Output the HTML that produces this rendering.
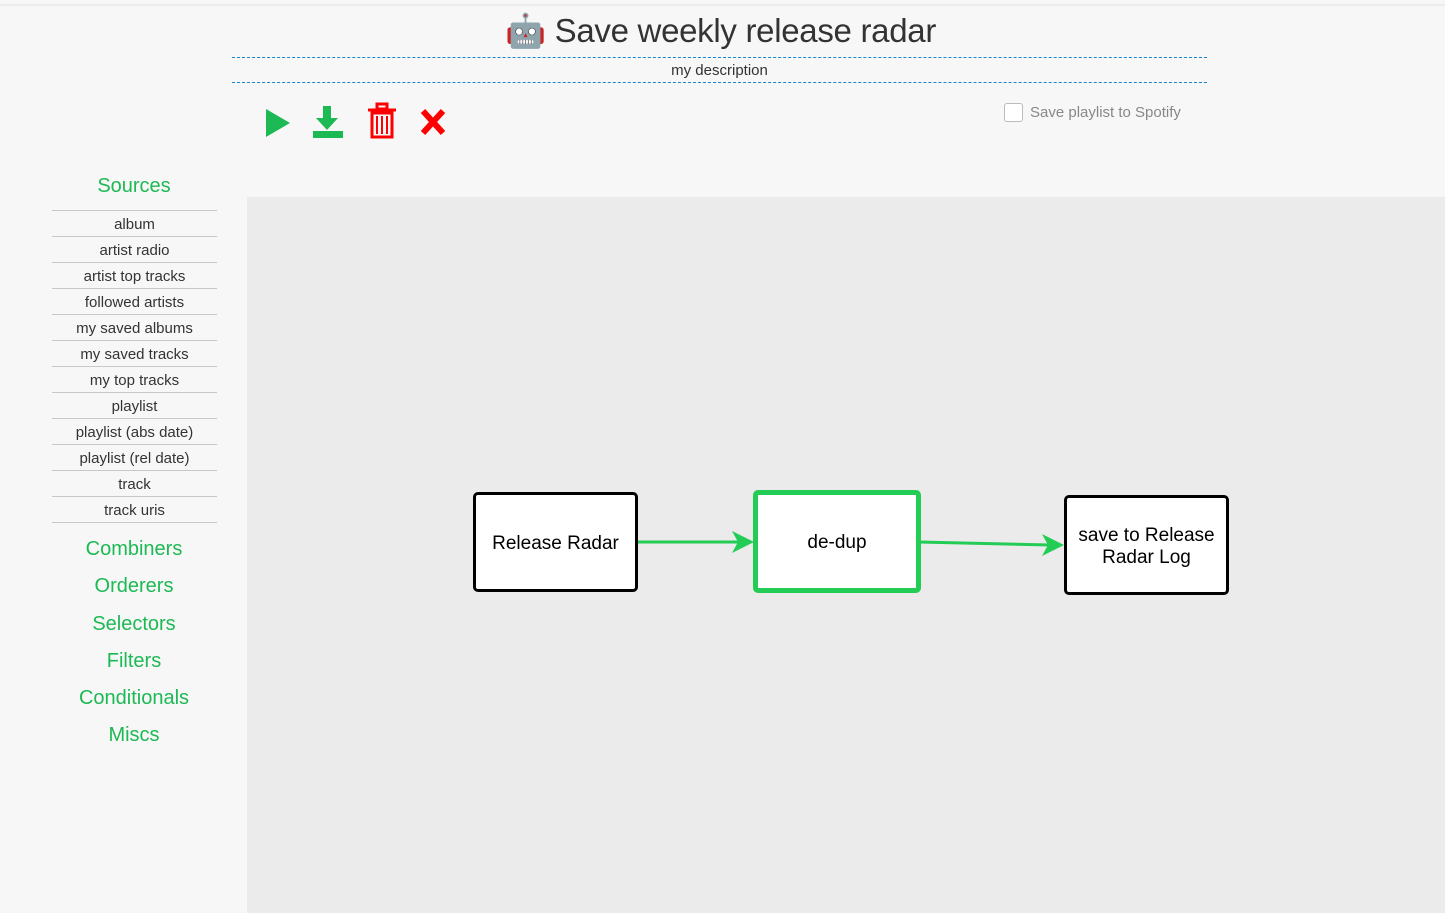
<!DOCTYPE html>
<html><head><style>
body{margin:0;width:1445px;height:913px;background:#f7f7f7;font-family:"Liberation Sans",sans-serif;position:relative;overflow:hidden;color:#333}
.topline{position:absolute;left:0;top:4px;width:1445px;height:2px;background:#ececec}
.title{position:absolute;left:505px;top:12px;font-size:33px;color:#333;white-space:nowrap;letter-spacing:-0.3px}
.desc{position:absolute;left:232px;top:57px;width:975px;height:24px;border-top:1px dashed #1a85d0;border-bottom:1px dashed #1a85d0;text-align:center;font-size:15px;line-height:26px;color:#333}
.side{position:absolute;left:52px;width:165px;text-align:center}
.cat{position:absolute;left:0;width:268px;text-align:center;color:#1db954;font-size:20px}
.item{height:25px;border-top:1px solid #c8c8c8;font-size:15px;line-height:27px;color:#333}
.canvas{position:absolute;left:247px;top:197px;width:1198px;height:716px;background:#ebebeb}
.node{position:absolute;background:#fff;border:3px solid #000;border-radius:5px;display:flex;align-items:center;justify-content:center;text-align:center;font-size:19px;color:#000;box-sizing:border-box;padding-top:3px}
</style></head><body>
<div class="topline"></div>
<div class="title">🤖 Save weekly release radar</div>
<div class="desc">my description</div>
<svg style="position:absolute;left:260px;top:100px" width="200" height="42">
<polygon points="6,9 30,23 6,37" fill="#1db954"/>
<rect x="63" y="6" width="8" height="14" fill="#1db954"/><polygon points="56,18 78,18 67,30" fill="#1db954"/><rect x="53" y="31" width="30" height="7" fill="#1db954"/>
<g fill="none" stroke="#f00" stroke-width="3"><rect x="112" y="13" width="20" height="24"/><line x1="108" y1="10" x2="136" y2="10"/><rect x="117" y="4" width="10" height="5"/><line x1="117" y1="16" x2="117" y2="34" stroke-width="2"/><line x1="122" y1="16" x2="122" y2="34" stroke-width="2"/><line x1="127" y1="16" x2="127" y2="34" stroke-width="2"/></g>
<g stroke="#f00" stroke-width="6"><line x1="163" y1="11" x2="183" y2="33"/><line x1="183" y1="11" x2="163" y2="33"/></g>
</svg>
<div style="position:absolute;left:1004px;top:103px;width:17px;height:17px;border:1px solid #bbb;border-radius:3px;background:#fff"></div>
<div style="position:absolute;left:1030px;top:104px;font-size:15px;color:#888">Save playlist to Spotify</div>
<div class="cat" style="top:175px">Sources</div>
<div class="side" style="top:210px">
<div class="item">album</div><div class="item">artist radio</div><div class="item">artist top tracks</div><div class="item">followed artists</div><div class="item">my saved albums</div><div class="item">my saved tracks</div><div class="item">my top tracks</div><div class="item">playlist</div><div class="item">playlist (abs date)</div><div class="item">playlist (rel date)</div><div class="item">track</div><div class="item">track uris</div><div style="border-top:1px solid #c8c8c8"></div>
</div>
<div class="cat" style="top:538px">Combiners</div>
<div class="cat" style="top:575px">Orderers</div>
<div class="cat" style="top:613px">Selectors</div>
<div class="cat" style="top:650px">Filters</div>
<div class="cat" style="top:687px">Conditionals</div>
<div class="cat" style="top:724px">Miscs</div>
<div class="canvas"></div>
<svg style="position:absolute;left:0;top:0" width="1445" height="913">
<g stroke="#22cc55" stroke-width="3" fill="#22cc55">
<line x1="637" y1="542" x2="740" y2="542"/><polygon points="754,542 732,531 738,542 732,553" stroke="none"/>
<line x1="919" y1="542" x2="1050" y2="545"/><polygon points="1064,545 1042,534 1048,545 1042,556" stroke="none"/>
</g></svg>
<div class="node" style="left:473px;top:492px;width:165px;height:100px">Release Radar</div>
<div class="node" style="left:753px;top:490px;width:168px;height:103px;border:5px solid #22cc55">de-dup</div>
<div class="node" style="left:1064px;top:495px;width:165px;height:100px">save to Release<br>Radar Log</div>
</body></html>
